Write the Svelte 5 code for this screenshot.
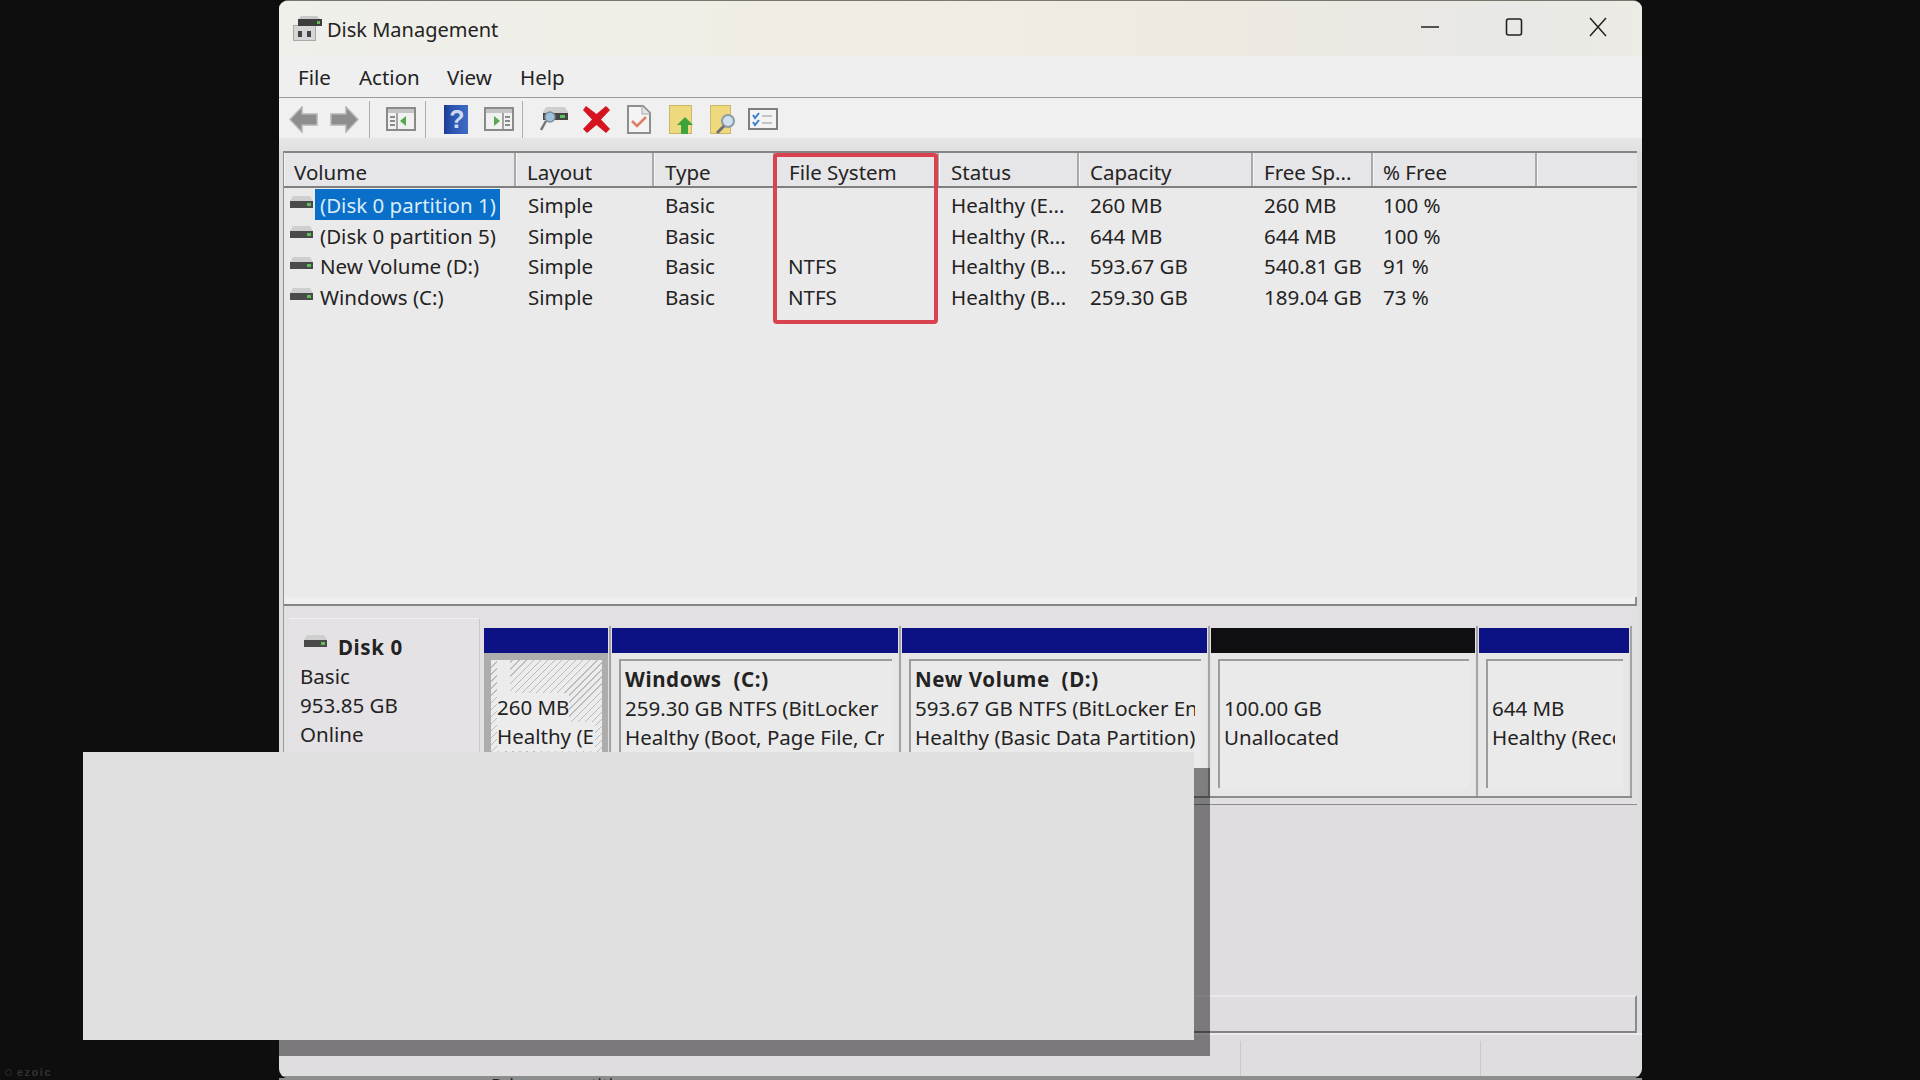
<script>
  const menus = ['File', 'Action', 'View', 'Help'];
  const columns = ['Volume', 'Layout', 'Type', 'File System', 'Status', 'Capacity', 'Free Sp...', '% Free', ''];
  const volumes = [
    { name: '(Disk 0 partition 1)', fs: '', status: 'Healthy (E...', cap: '260 MB', free: '260 MB', pct: '100 %', selected: true },
    { name: '(Disk 0 partition 5)', fs: '', status: 'Healthy (R...', cap: '644 MB', free: '644 MB', pct: '100 %' },
    { name: 'New Volume (D:)', fs: 'NTFS', status: 'Healthy (B...', cap: '593.67 GB', free: '540.81 GB', pct: '91 %' },
    { name: 'Windows (C:)', fs: 'NTFS', status: 'Healthy (B...', cap: '259.30 GB', free: '189.04 GB', pct: '73 %' }
  ];
  const partitions = [
    { kind: 'efi', title: '', size: '260 MB', health: 'Healthy (EFI System Partition)' },
    { kind: 'primary', title: 'Windows  (C:)', size: '259.30 GB NTFS (BitLocker Encrypted)', health: 'Healthy (Boot, Page File, Crash Dump, Basic Data Partition)' },
    { kind: 'primary', title: 'New Volume  (D:)', size: '593.67 GB NTFS (BitLocker Encrypted)', health: 'Healthy (Basic Data Partition)' },
    { kind: 'free', title: '', size: '100.00 GB', health: 'Unallocated' },
    { kind: 'primary', title: '', size: '644 MB', health: 'Healthy (Recovery Partition)' }
  ];
</script>

{#snippet hdd()}
  <svg class="hdd" width="23" height="13" viewBox="0 0 23 13">
    <path d="M3 0h17l3 5H0z" fill="#cfcfcf" />
    <rect x="0" y="5" width="23" height="7" fill="#4a4a4a" />
    <rect x="17" y="7" width="4" height="3" fill="#5fc05a" />
  </svg>
{/snippet}

<div class="screen">
  <div class="window">
    <header class="titlebar">
      <svg class="app-icon" width="29" height="25" viewBox="0 0 29 25">
        <rect x="0.500" y="9.500" width="22" height="15" fill="#d6d6d6" stroke="#a8a8a8" />
        <rect x="5" y="15" width="4" height="6" fill="#444" />
        <rect x="14" y="15" width="4" height="6" fill="#444" />
        <path d="M8 0h16l4 4v6H5V4z" fill="#c9c9c9" />
        <rect x="5" y="3" width="24" height="7" fill="#3d3d3d" />
        <rect x="24" y="5" width="3" height="3" fill="#62b85c" />
      </svg>
      <span class="title">Disk Management</span>
      <div class="caption">
        <svg width="20" height="20" viewBox="0 0 20 20"><path d="M1 10h18" stroke="#222" stroke-width="1.6" /></svg>
        <svg width="20" height="20" viewBox="0 0 20 20"><rect x="2.500" y="2" width="15" height="16" rx="2" fill="none" stroke="#222" stroke-width="1.6" /></svg>
        <svg width="20" height="20" viewBox="0 0 20 20"><path d="M2 1l16 18M18 1L2 19" stroke="#222" stroke-width="1.500" /></svg>
      </div>
    </header>

    <nav class="menubar">
      {#each menus as m}<span>{m}</span>{/each}
    </nav>

    <div class="toolbar">
      <svg width="29" height="27" viewBox="0 0 29 27"><path d="M1 13.500 13 1v7h15v11H13v7z" fill="#8d8d8d" stroke="#b4b4b4" stroke-width="1.500" /></svg>
      <svg width="29" height="27" viewBox="0 0 29 27"><path d="M28 13.500 16 1v7H1v11h15v7z" fill="#8d8d8d" stroke="#b4b4b4" stroke-width="1.500" /></svg>
      <i class="sep"></i>
      <svg width="30" height="24" viewBox="0 0 30 24">
        <rect x="1" y="1" width="28" height="22" fill="#f1f1f1" stroke="#8a8a8a" stroke-width="2" />
        <rect x="2" y="2" width="26" height="4" fill="#c4c4c4" />
        <path d="M11 6v17" stroke="#8a8a8a" stroke-width="1.500" />
        <path d="M4 10h5M4 14h5M4 18h5" stroke="#8a8a8a" stroke-width="2" />
        <path d="M20 9v10l-6-5z" fill="#57a84f" />
      </svg>
      <i class="sep"></i>
      <svg width="24" height="29" viewBox="0 0 24 29">
        <defs>
          <linearGradient id="helpfill" x1="0" x2="1" y1="0" y2="0">
            <stop offset="0" stop-color="#1c3a90" />
            <stop offset="0.3" stop-color="#2a52ae" />
            <stop offset="1" stop-color="#3f6cc6" />
          </linearGradient>
        </defs>
        <rect width="24" height="29" fill="url(#helpfill)" />
        <text x="13" y="23" text-anchor="middle" font-family="Liberation Sans, sans-serif" font-weight="700" font-size="25" fill="#ccd8f0">?</text>
      </svg>
      <svg width="30" height="24" viewBox="0 0 30 24">
        <rect x="1" y="1" width="28" height="22" fill="#f1f1f1" stroke="#8a8a8a" stroke-width="2" />
        <rect x="2" y="2" width="26" height="4" fill="#c4c4c4" />
        <path d="M19 6v17" stroke="#8a8a8a" stroke-width="1.500" />
        <path d="M21 10h5M21 14h5M21 18h5" stroke="#8a8a8a" stroke-width="2" />
        <path d="M10 9v10l6-5z" fill="#57a84f" />
      </svg>
      <i class="sep"></i>
      <svg width="29" height="24" viewBox="0 0 29 24">
        <path d="M6 0h19l3 5v7H3V5z" fill="#cfcfcf" />
        <rect x="3" y="6" width="25" height="7" fill="#454545" />
        <rect x="20" y="8" width="5" height="3" fill="#62c05c" />
        <circle cx="10" cy="10" r="5" fill="#9fc1dc" stroke="#7d8c98" stroke-width="1.500" />
        <path d="M6 14 1 23" stroke="#777" stroke-width="2.500" />
      </svg>
      <svg width="27" height="27" viewBox="0 0 27 27"><path d="M3 0l10.500 8L23 0l4 4-9 9.500 9 9.500-4 4-9.500-8L4 27l-4-4 9-9.500L0 4z" fill="#d5141f" /></svg>
      <svg width="24" height="29" viewBox="0 0 24 29">
        <path d="M1 1h15l7 7v20H1z" fill="#f4f4f4" stroke="#8e8e8e" stroke-width="2" />
        <path d="M15 1v8h8" fill="#e5e5e5" stroke="#a5a5a5" />
        <path d="M5 16l5 5 9-9" fill="none" stroke="#de7f68" stroke-width="2.500" />
      </svg>
      <svg width="25" height="29" viewBox="0 0 25 29">
        <rect x="0.500" y="0.500" width="22" height="28" fill="#efd97f" stroke="#c9b869" />
        <path d="M16 12l8 8h-5v9h-7v-9H8z" fill="#3ea33a" />
      </svg>
      <svg width="26" height="29" viewBox="0 0 26 29">
        <rect x="0.500" y="0.500" width="20" height="28" fill="#efd97f" stroke="#c9b869" />
        <circle cx="18" cy="16" r="6" fill="#cfe0ee" stroke="#8c99a4" stroke-width="2" />
        <path d="M14 21 7 28" stroke="#6f6f6f" stroke-width="3" />
      </svg>
      <svg width="30" height="22" viewBox="0 0 30 22">
        <rect x="1" y="1" width="28" height="20" fill="#f3f3f3" stroke="#7f7f7f" stroke-width="2" />
        <path d="M5 7l2 3 4-5M5 14l2 3 4-5" fill="none" stroke="#3a7fd0" stroke-width="2" />
        <path d="M14 8h10M14 15h10" stroke="#b4b4b4" stroke-width="1.500" />
      </svg>
    </div>
    <div class="toolbar-band"></div>

    <section class="list">
      <div class="row head">
        {#each columns as c}<div class="col-head">{c}</div>{/each}
      </div>
      {#each volumes as v}
        <div class="row">
          <div class="cell volume">
            {@render hdd()}
            <span class="name" class:selected={v.selected}>{v.name}</span>
          </div>
          <div class="cell">Simple</div>
          <div class="cell">Basic</div>
          <div class="cell">{v.fs}</div>
          <div class="cell">{v.status}</div>
          <div class="cell">{v.cap}</div>
          <div class="cell">{v.free}</div>
          <div class="cell">{v.pct}</div>
        </div>
      {/each}
      <div class="highlight"></div>
      <div class="splitter"></div>
    </section>

    <section class="disks">
      <div class="disk-label">
        <div class="disk-name">{@render hdd()}<b>Disk 0</b></div>
        <div>Basic</div>
        <div>953.85 GB</div>
        <div>Online</div>
      </div>
      <div class="partitions">
        {#each partitions as p}
          <div class="partition {p.kind}">
            <div class="bar"></div>
            <div class="body">
              <div class="box">
                <div class="line title-line"><b>{p.title}</b></div>
                <div class="line"><span>{p.size}</span></div>
                <div class="line"><span>{p.health}</span></div>
              </div>
            </div>
          </div>
        {/each}
      </div>
    </section>

    <div class="empty"></div>
    <div class="lower-box"></div>
    <footer class="status">
      <i></i><i></i>
    </footer>
    <div class="ad-shadow"></div>
  </div>
  <div class="foot"><span>Primary partition</span></div>

  <div class="ad-box"></div>
  <div class="ezoic"><i></i>ezoic</div>
</div>

<style>
  :global(body) {
    margin: 0;
    background: #0e0e0e;
  }

  .screen {
    position: relative;
    width: 1920px;
    height: 1080px;
    overflow: hidden;
    padding-left: 279px;
    box-sizing: border-box;
    background: #0e0e0e;
    color: #232323;
    font-family: 'Noto Sans', 'Open Sans', sans-serif;
    font-size: 20.5px;
  }

  b {
    letter-spacing: 0.6px;
  }

  .window {
    position: relative;
    width: 1363px;
    height: 1078px;
    box-sizing: border-box;
    display: flex;
    flex-direction: column;
    background: #e0dde1;
    border-top: 1px solid #77776c;
    border-radius: 9px;
    overflow: hidden;
  }

  .titlebar {
    height: 55px;
    flex: none;
    display: flex;
    align-items: center;
    padding: 0 0 0 14px;
    background: linear-gradient(90deg, #efefeb, #f1ece1 55%, #ece9e2 75%, #e8e8e6 90%, #ecebe4);
  }

  .app-icon {
    flex: none;
  }

  .title {
    margin-left: 5px;
    padding-top: 1px;
    font-size: 20px;
  }

  .caption {
    margin-left: auto;
    display: grid;
    grid-template-columns: 84px 84px 20px;
    padding-right: 34px;
    margin-top: -3px;
  }

  .menubar {
    height: 41px;
    flex: none;
    display: grid;
    grid-template-columns: 61px 88px 73px auto;
    justify-content: start;
    align-items: center;
    padding-left: 19px;
    background: #efefef;
    border-bottom: 1px solid #9a9a9a;
  }

  .toolbar {
    height: 38px;
    flex: none;
    display: grid;
    grid-template-columns: 41px 39px 17px 39px 19px 40px 38px 18px 43px 44px 42px 41px 38px 30px;
    align-items: center;
    padding: 2px 0 0 10px;
    background: #f0f0f0;
  }

  .toolbar svg {
    display: block;
  }

  .sep {
    width: 1px;
    height: 37px;
    background: #aeaeae;
  }

  .toolbar-band {
    height: 13px;
    flex: none;
    background: linear-gradient(#e6e6e6, #e2e1e2);
  }

  .list {
    position: relative;
    height: 455px;
    flex: none;
    box-sizing: border-box;
    margin: 0 5px 0 4px;
    background: #ebeaea;
    border-top: 2px solid #858585;
    border-left: 1px solid #8f8f8f;
  }

  .row {
    display: grid;
    grid-template-columns: 232px 138px 121px 164px 140px 174px 120px 164px 1fr;
    grid-template-rows: 30.67px;
    height: 30.67px;
    line-height: 33px;
  }

  .head {
    height: 35px;
    grid-template-rows: 33px;
    line-height: 39px;
    box-sizing: border-box;
    background: #e6e5e7;
    border-bottom: 2px solid #7f7f7f;
    margin-bottom: 1px;
  }

  .col-head {
    padding-left: 11px;
    border-right: 2px solid #a9a9a9;
    box-sizing: border-box;
    box-shadow: inset 1px 0 0 #f5f5f5;
    white-space: nowrap;
  }

  .col-head:first-child {
    padding-left: 10px;
  }

  .col-head:nth-child(4) {
    padding-left: 14px;
  }

  .col-head:nth-child(5) {
    padding-left: 12px;
  }

  .col-head:nth-child(8) {
    padding-left: 10px;
  }

  .col-head:last-child {
    border-right: 0;
  }

  .cell {
    padding-left: 11px;
    white-space: nowrap;
  }

  .cell:nth-child(2),
  .cell:nth-child(5) {
    padding-left: 12px;
  }

  .cell:nth-child(4) {
    padding-left: 13px;
  }

  .cell:nth-child(8) {
    padding-left: 10px;
  }

  .volume {
    display: flex;
    align-items: center;
    padding-left: 6px;
  }

  .hdd {
    flex: none;
    margin-top: -4px;
  }

  .name {
    height: 30.67px;
    margin-left: 2px;
    padding: 0 4px 0 5px;
  }

  .name.selected {
    background: #0a6fc9;
    color: #d8ecfb;
  }

  .highlight {
    position: absolute;
    left: 489px;
    top: 0;
    width: 165px;
    height: 171px;
    box-sizing: border-box;
    border: 4px solid #d8434f;
    border-radius: 4px;
    pointer-events: none;
  }

  .splitter {
    position: absolute;
    left: 0;
    right: 0;
    bottom: 0;
    height: 9px;
    box-sizing: border-box;
    background: #efefef;
    border-bottom: 2px solid #848484;
    border-right: 2px solid #8d8d8d;
  }

  .disks {
    height: 199px;
    flex: none;
    box-sizing: border-box;
    display: flex;
    align-items: flex-start;
    margin: 0 5px 0 4px;
    padding: 12px 0 0 5px;
    background: #e2e0e3;
    border-left: 1px solid #9a9a9a;
    border-bottom: 1px solid #8d8d8d;
  }

  .disk-label {
    width: 191px;
    height: 180px;
    flex: none;
    box-sizing: border-box;
    padding: 14px 0 0 11px;
    line-height: 29px;
    background: #e4e2e5;
    border-top: 1px solid #f1f1f1;
    border-right: 1px solid #c9c9c9;
  }

  .disk-name {
    display: flex;
    align-items: center;
    gap: 11px;
    padding-left: 4px;
  }

  .disk-name .hdd {
    margin-top: -13px;
  }

  .partitions {
    display: grid;
    grid-template-columns: 128px 290px 309px 268px 154px;
    margin-left: 3px;
    margin-top: 8px;
    height: 172px;
    box-sizing: border-box;
    border-bottom: 2px solid #8c8c8c;
  }

  .partition {
    min-width: 0;
    display: flex;
    flex-direction: column;
    padding: 2px 1px 0;
    border-right: 2px solid #a4a4a4;
  }

  .bar {
    height: 25px;
    flex: none;
    background: #0c1284;
  }

  .free .bar {
    background: #0f0e10;
  }

  .body {
    flex: 1;
    padding: 6px 6px 8px 7px;
    background: #e8e7e8;
  }

  .box {
    height: 100%;
    box-sizing: border-box;
    padding: 4px 8px 0 4px;
    overflow: hidden;
    background: #ebeaea;
    border-top: 2px solid #9c9c9c;
    border-left: 2px solid #9c9c9c;
  }

  .partition:nth-child(3) .box {
    padding-right: 6px;
  }

  .line {
    height: 29px;
    line-height: 29px;
    white-space: pre;
    overflow: hidden;
  }

  .efi .body {
    padding: 7px 6px 7px 7px;
    background: #adadad;
  }

  .efi .box {
    padding: 0 0 0 6px;
    border: 0;
    background: repeating-linear-gradient(-45deg, #ececec 0 4px, #bcbcbc 4px 5px);
  }

  .efi .line {
    margin-right: 7px;
  }

  .efi .line span {
    display: block;
    width: fit-content;
    background: #ececec;
  }

  .efi .title-line {
    width: 13px;
    height: 33px;
    background: #ececec;
  }

  .empty {
    height: 190px;
    flex: none;
  }

  .lower-box {
    height: 38px;
    flex: none;
    box-sizing: border-box;
    margin: 0 5px 0 4px;
    border-top: 2px solid #ebe9ec;
    border-bottom: 2px solid #85828a;
    border-right: 2px solid #8b8890;
  }

  .status {
    flex: 1;
    display: grid;
    grid-template-columns: 962px 240px;
    padding: 6px 0 0 0;
    border-bottom: 2px solid #8d8d8d;
    border-top: 2px solid #ecebed;
  }

  .status i {
    border-right: 1px solid #cbc8cd;
  }

  /* drop shadow of the overlay box, only visible on the window */
  .ad-shadow {
    position: absolute;
    left: -180px;
    top: 767px;
    width: 1111px;
    height: 288px;
    background: rgba(0, 0, 0, 0.45);
  }

  .foot {
    width: 1363px;
    height: 2px;
    padding-left: 212px;
    box-sizing: border-box;
    overflow: hidden;
    background: #8d8d8d;
    line-height: 14px;
    font-size: 18px;
    color: #222;
  }

  .ad-box {
    position: absolute;
    left: 83px;
    top: 752px;
    width: 1111px;
    height: 288px;
    background: #e0e0e0;
  }

  .ezoic {
    position: absolute;
    left: 5px;
    bottom: 2px;
    display: flex;
    align-items: center;
    gap: 5px;
    font: 700 11px/12px 'Liberation Sans', sans-serif;
    letter-spacing: 1.5px;
    color: #333;
  }

  .ezoic i {
    width: 7px;
    height: 7px;
    box-sizing: border-box;
    border: 1px solid #2c2c2c;
    border-radius: 50%;
  }
</style>
